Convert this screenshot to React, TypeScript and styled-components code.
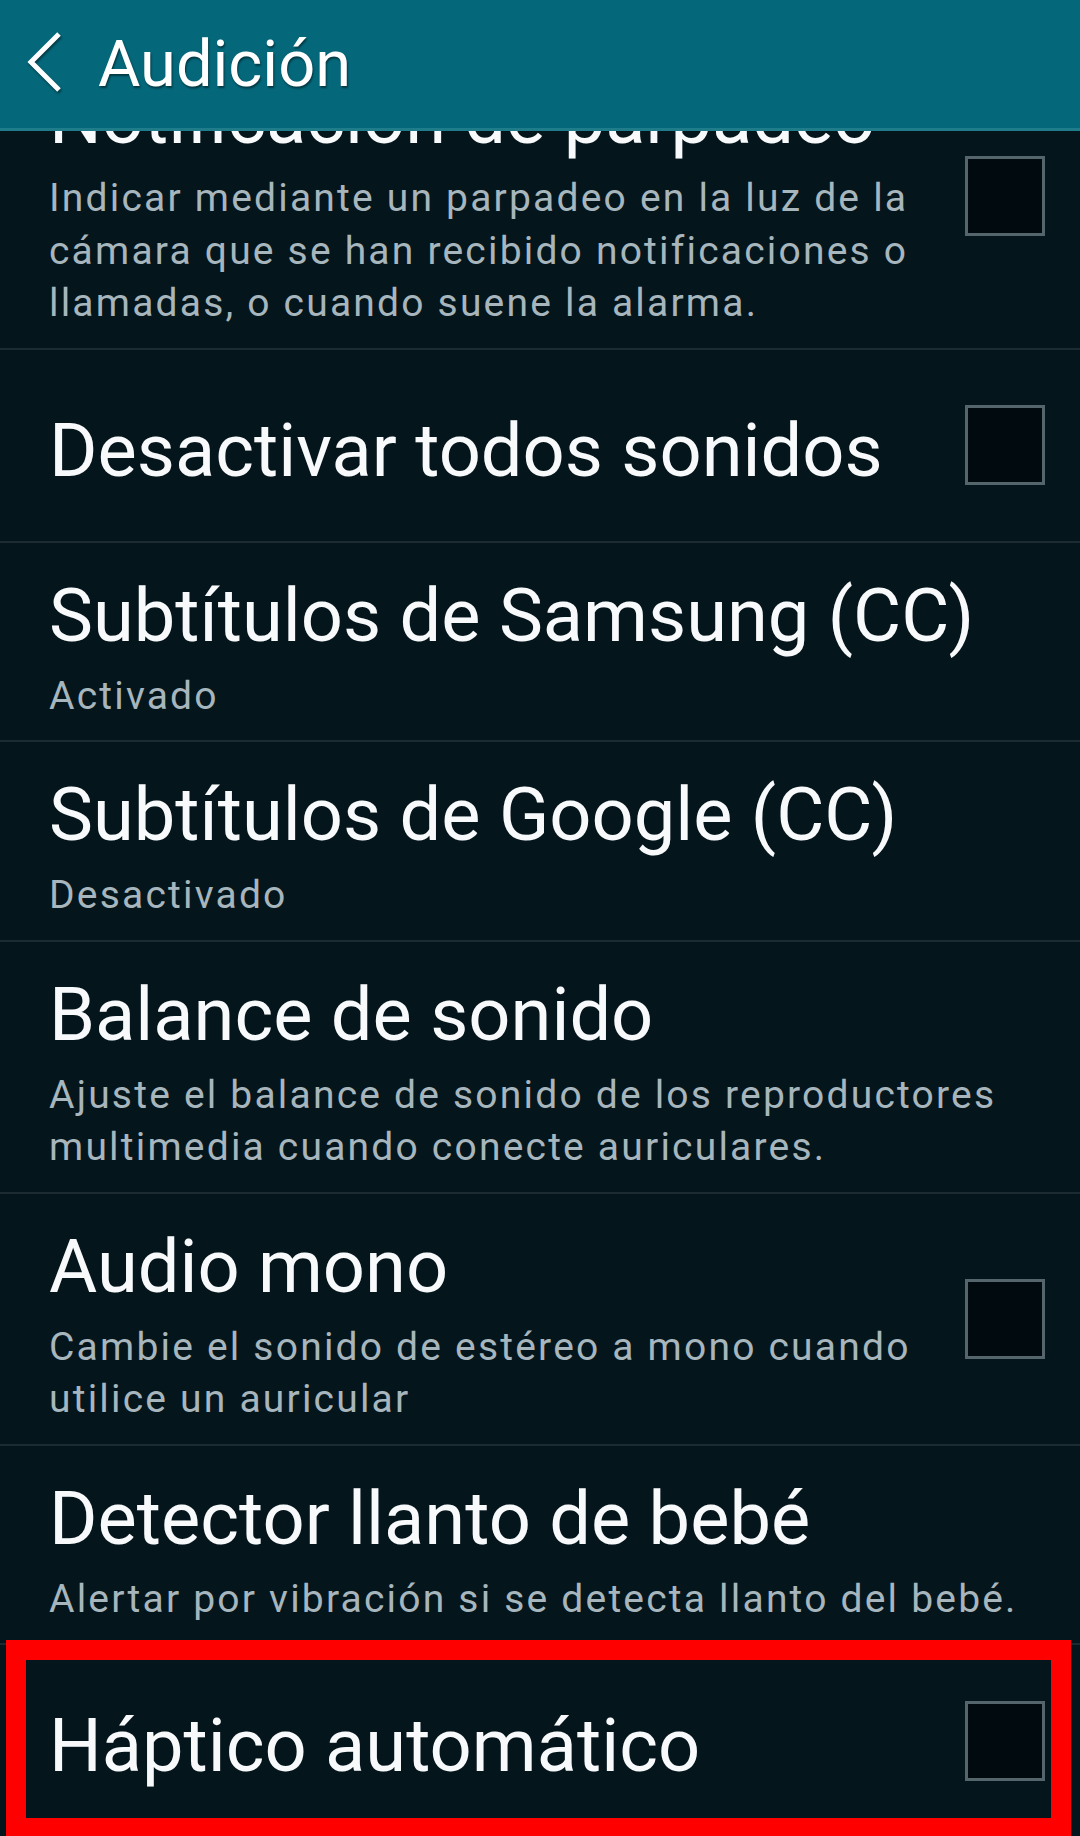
import React from 'react';
import styled, { createGlobalStyle } from 'styled-components';

const GlobalStyle = createGlobalStyle`
    html, body {
        margin: 0;
        padding: 0;
        background: #04151c;
    }
    body {
        font-family: Roboto, "Noto Sans", "Liberation Sans", sans-serif;
        -webkit-font-smoothing: antialiased;
    }
`;

const Screen = styled.div`
    display: flex;
    flex-direction: column;
    width: 1080px;
    height: 1836px;
    overflow: hidden;
    background: #04151c;
`;

const Header = styled.header`
    position: relative;
    z-index: 2;
    flex: none;
    display: flex;
    align-items: center;
    box-sizing: border-box;
    height: 131px;
    padding-left: 26px;
    background: #04677a;
    border-bottom: 3px solid #1f7c8b;
`;

const BackIcon = styled.svg`
    flex: none;
    width: 36px;
    height: 62px;
    margin-top: -4px;
    filter: drop-shadow(1px 2px 1px rgba(0, 0, 0, 0.45));
`;

const HeaderTitle = styled.h1`
    margin: 0 0 0 36px;
    font-size: 65px;
    font-weight: 400;
    line-height: 1;
    color: #ffffff;
    text-shadow: 1px 2px 2px rgba(0, 0, 0, 0.45);
`;

// the list is scrolled a little, its first row slides under the header
const Viewport = styled.div`
    flex: 1;
    overflow: hidden;
`;

const List = styled.ul<{ $offset: number }>`
    list-style: none;
    margin: ${p => -p.$offset}px 0 0;
    padding: 0;
`;

const Row = styled.li<{ $last?: boolean }>`
    position: relative;
    display: flex;
    align-items: center;
    box-sizing: border-box;
    min-height: 193px;
    padding-left: 49px;
    padding-right: 35px;
    border-bottom: 2px solid ${p => (p.$last ? 'transparent' : '#1c2b31')};
`;

const TextBlock = styled.div`
    flex: 1;
    min-width: 0;
    padding: 29px 0 18px;
`;

const Title = styled.div`
    font-size: 74px;
    line-height: 88px;
    color: #f7f9fa;
    white-space: nowrap;
`;

const Summary = styled.div`
    margin-top: 10px;
    font-size: 39px;
    line-height: 52.5px;
    letter-spacing: 2.2px;
    color: #a7b6bc;
    white-space: nowrap;
`;

const SummaryLine = styled.span`
    display: block;
`;

const CheckBox = styled.span`
    flex: none;
    box-sizing: border-box;
    width: 80px;
    height: 80px;
    margin-left: 24px;
    border: 3px solid #55656c;
    background: #010b0f;
`;

const Highlight = styled.div`
    position: absolute;
    top: -5px;
    left: 6px;
    right: 9px;
    bottom: -2px;
    border: 20px solid #fe0000;
    pointer-events: none;
`;

type Item = {
    title: string;
    summary?: string[];
    checkbox?: boolean;
    highlighted?: boolean;
};

const items: Item[] = [
    {
        title: 'Notificación de parpadeo',
        summary: [
            'Indicar mediante un parpadeo en la luz de la',
            'cámara que se han recibido notificaciones o',
            'llamadas, o cuando suene la alarma.',
        ],
        checkbox: true,
    },
    { title: 'Desactivar todos sonidos', checkbox: true },
    { title: 'Subtítulos de Samsung (CC)', summary: ['Activado'] },
    { title: 'Subtítulos de Google (CC)', summary: ['Desactivado'] },
    {
        title: 'Balance de sonido',
        summary: ['Ajuste el balance de sonido de los reproductores', 'multimedia cuando conecte auriculares.'],
    },
    {
        title: 'Audio mono',
        summary: ['Cambie el sonido de estéreo a mono cuando', 'utilice un auricular'],
        checkbox: true,
    },
    { title: 'Detector llanto de bebé', summary: ['Alertar por vibración si se detecta llanto del bebé.'] },
    { title: 'Háptico automático', checkbox: true, highlighted: true },
];

export default function App() {
    return (
        <Screen>
            <GlobalStyle />
            <Header>
                <BackIcon viewBox="0 0 36 62">
                    <polyline points="33,3 5,31 33,59" fill="none" stroke="#ffffff" strokeWidth="5" />
                </BackIcon>
                <HeaderTitle>Audición</HeaderTitle>
            </Header>
            <Viewport>
                <List $offset={86}>
                    {items.map((item, idx) => (
                        <Row key={item.title} $last={idx === items.length - 1}>
                            <TextBlock>
                                <Title>{item.title}</Title>
                                {item.summary && (
                                    <Summary>
                                        {item.summary.map(line => <SummaryLine key={line}>{line}</SummaryLine>)}
                                    </Summary>
                                )}
                            </TextBlock>
                            {item.checkbox && <CheckBox />}
                            {item.highlighted && <Highlight />}
                        </Row>
                    ))}
                </List>
            </Viewport>
        </Screen>
    );
}
